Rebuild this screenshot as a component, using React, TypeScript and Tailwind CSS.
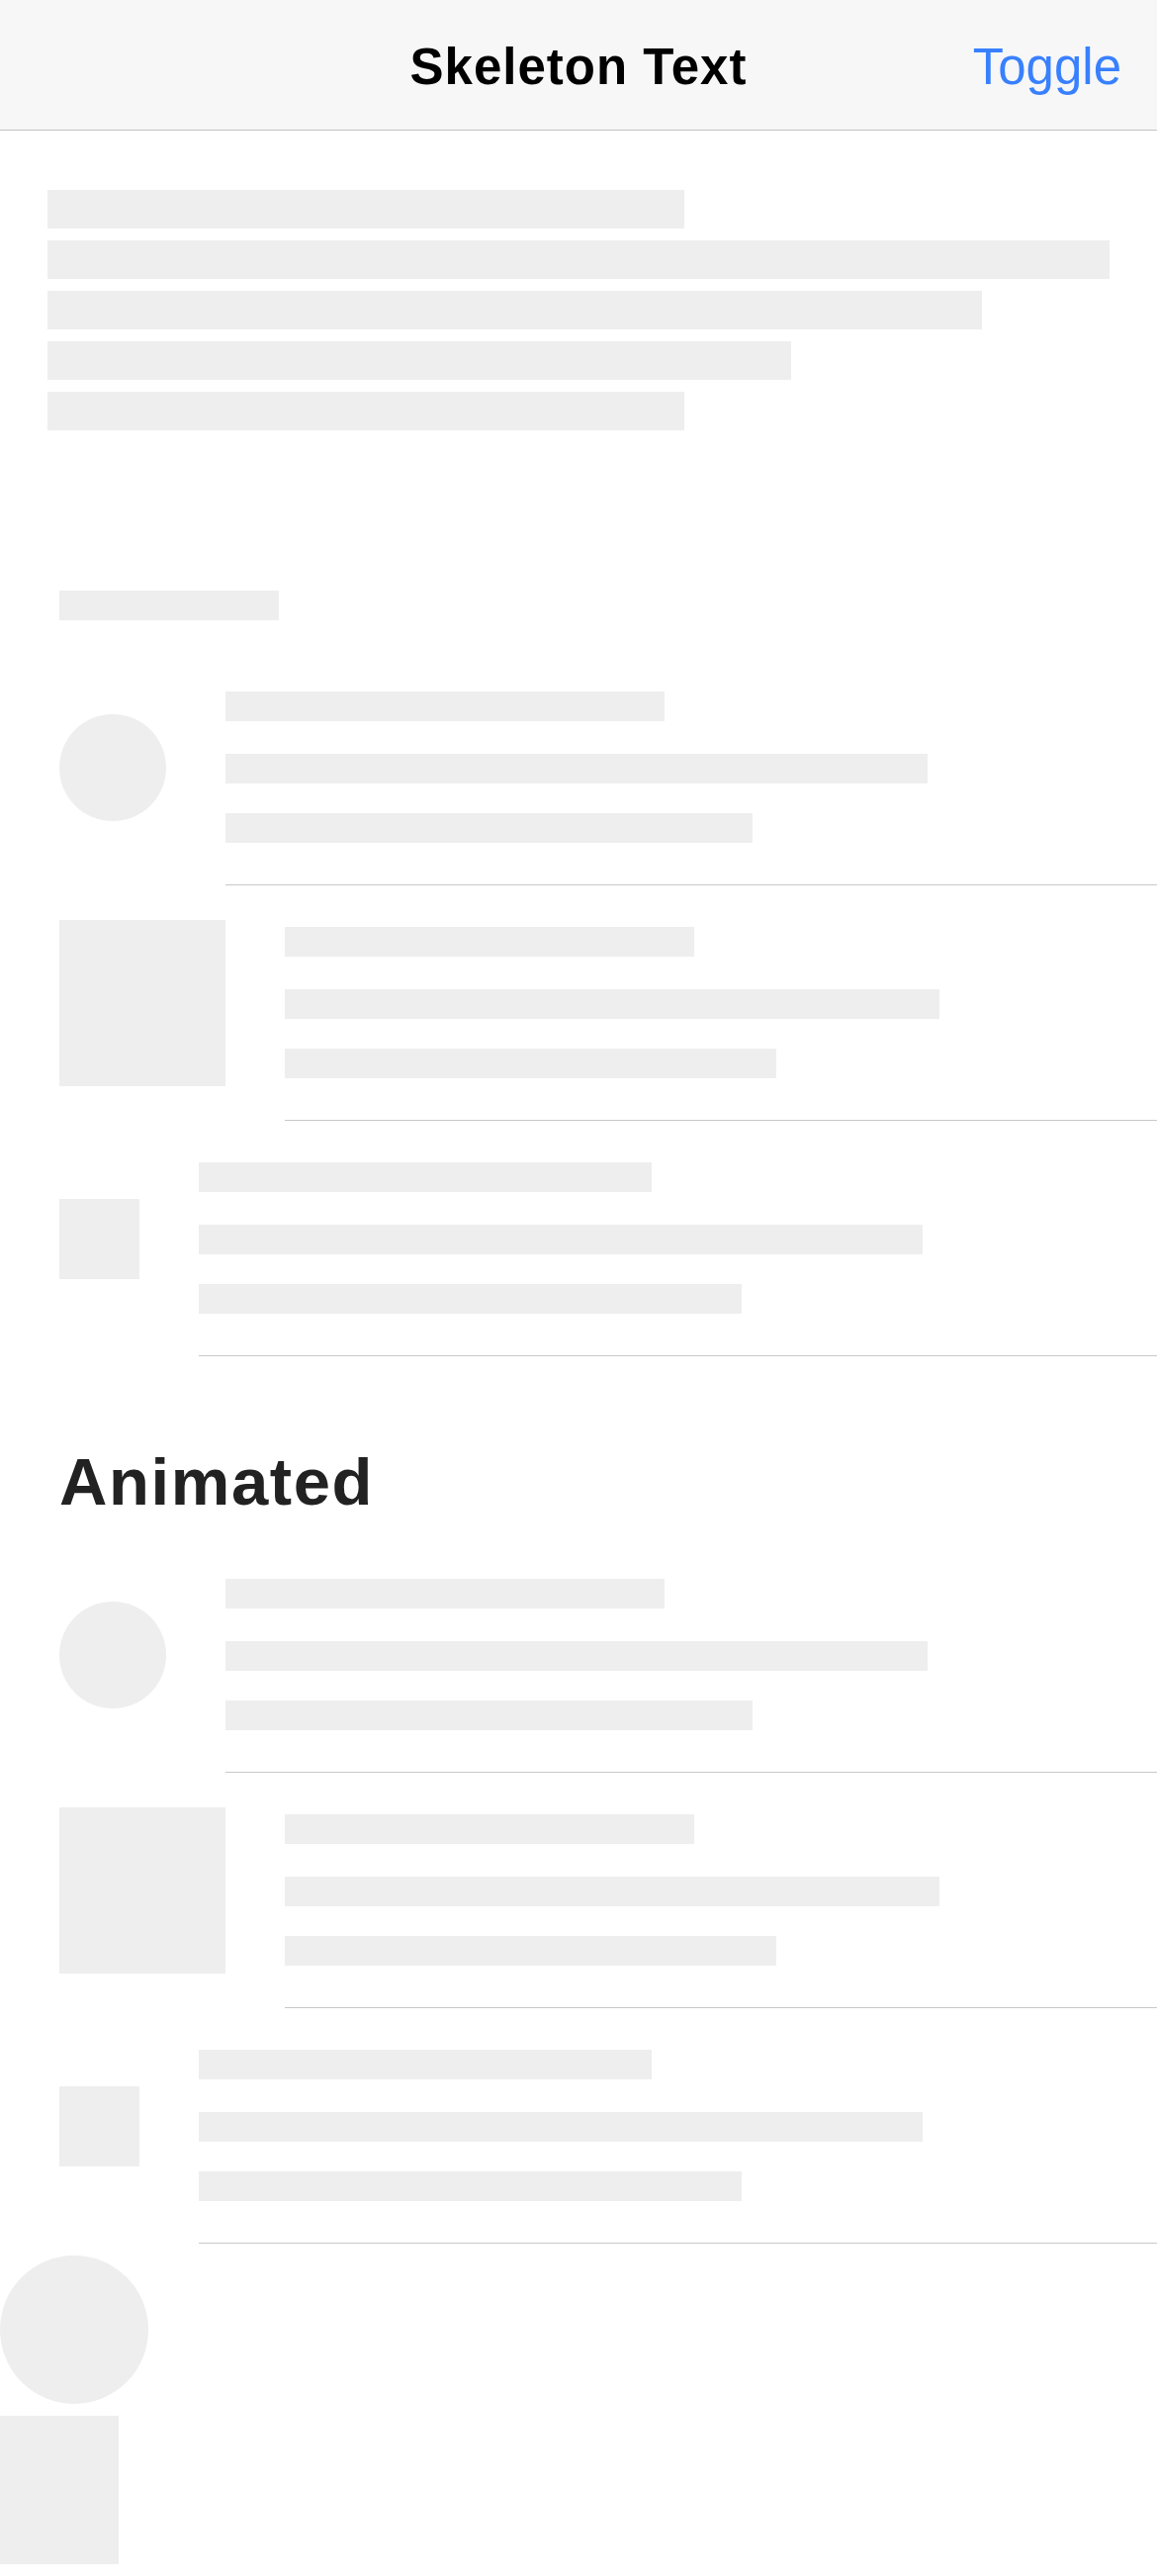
import React from "react";

type Slot = "avatar" | "thumb" | "small";

const bar = "bg-[#eeeeee]";

function StartSlot({ kind }: { kind: Slot }) {
  if (kind === "avatar") return <div className={`w-[108px] h-[108px] rounded-full shrink-0 ${bar}`} />;
  if (kind === "thumb") return <div className={`w-[168px] h-[168px] shrink-0 ${bar}`} />;
  return <div className={`w-[81px] h-[81px] shrink-0 ${bar}`} />;
}

function Item({ kind }: { kind: Slot }) {
  return (
    <div className="flex items-center pl-[60px]">
      <StartSlot kind={kind} />
      <div className="flex-1 ml-[60px] border-b border-[#c8c8c8] pr-[54px] pt-[42px] pb-[42px]">
        <div className={`h-[30px] w-1/2 ${bar}`} />
        <div className={`h-[30px] w-4/5 mt-[33px] ${bar}`} />
        <div className={`h-[30px] w-3/5 mt-[30px] ${bar}`} />
      </div>
    </div>
  );
}

function Items() {
  return (
    <>
      <Item kind="avatar" />
      <Item kind="thumb" />
      <Item kind="small" />
    </>
  );
}

export default function App() {
  const paragraph = ["w-3/5", "w-full", "w-[88%]", "w-[70%]", "w-3/5"];

  return (
    <div className="w-[1170px] bg-white font-['Liberation_Sans',Arial,sans-serif]">
      <header className="relative h-[132px] bg-[#f7f7f7] border-b border-[#c4c4c4] flex items-center justify-center">
        <div className="text-[51px] font-bold text-black tracking-[1px] pt-[6px]">Skeleton Text</div>
        <div className="absolute right-[36px] top-0 h-full flex items-center pt-[6px] text-[51px] text-[#3880ff]">
          Toggle
        </div>
      </header>

      <div className="px-[48px] pt-[48px] pb-[60px]">
        {paragraph.map((w, i) => (
          <div key={i} className={`h-[39px] mt-[12px] ${w} ${bar}`} />
        ))}
      </div>

      <section>
        <div className="pl-[60px] pt-[102px] pb-[30px]">
          <div className={`h-[30px] w-1/5 ${bar}`} />
        </div>
        <Items />
      </section>

      <section>
        <div className="pl-[60px] pt-[94px] pb-[23px]">
          <h2 className="text-[67px] leading-[66px] font-bold tracking-[1.6px] text-[#222222]">Animated</h2>
        </div>
        <Items />
      </section>

      <div className="pt-[12px] pb-[12px]">
        <div className={`w-[150px] h-[150px] rounded-full ${bar}`} />
        <div className={`w-[120px] h-[150px] mt-[12px] ${bar}`} />
      </div>
    </div>
  );
}
